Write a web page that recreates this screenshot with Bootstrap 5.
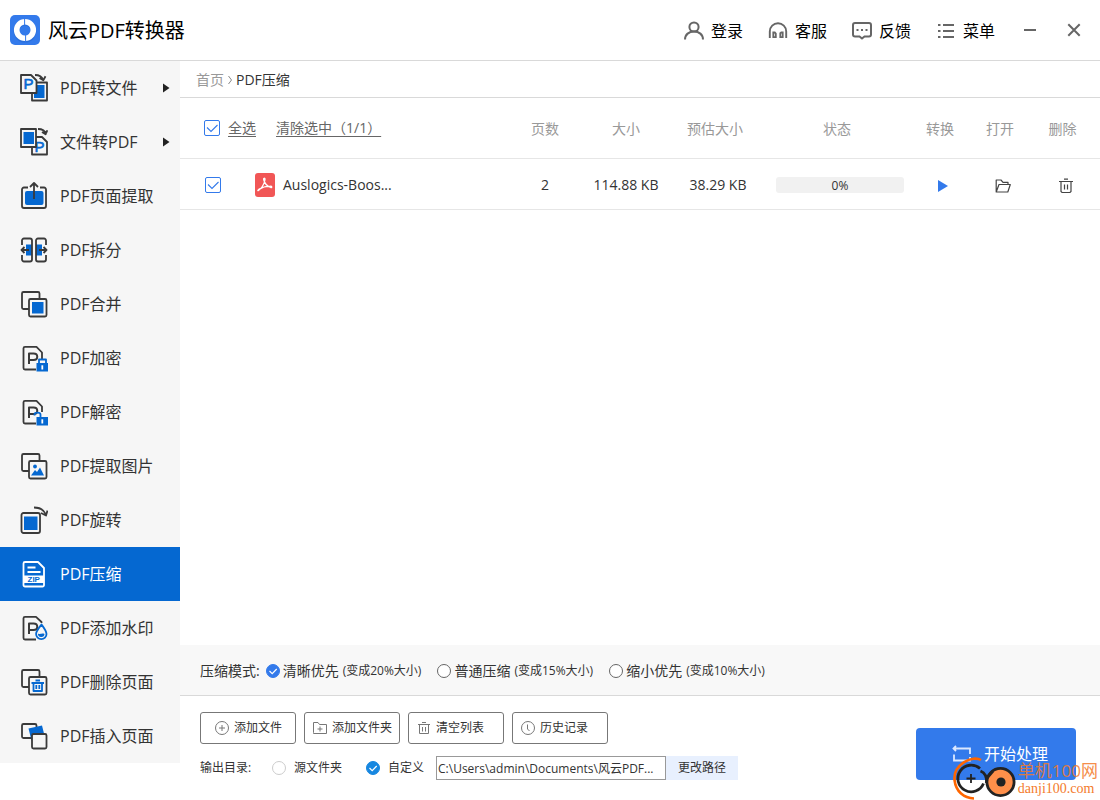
<!DOCTYPE html>
<html lang="zh-CN">
<head>
<meta charset="utf-8">
<meta name="viewport" content="width=device-width, initial-scale=1">
<title>风云PDF转换器</title>
<link rel="stylesheet" href="https://cdn.jsdelivr.net/npm/bootstrap@5.3.0/dist/css/bootstrap.min.css">
<style>
  :root { --ink: #333; --brand: #0568d1; --action: #337aeb; --rule: #d9d9d9; }
  body { font-family: "Open Sans", "Noto Sans CJK SC", sans-serif; font-size: 14px; line-height: 20px; color: var(--ink); }
  svg { flex: none; display: block; }
  .top-bar { height: 61px; border-bottom: 1px solid var(--rule); padding: 0 16px 0 10px; }
  .app-title { font-size: 20px; line-height: 28px; color: #000; padding-top: 2px; }
  .plain-btn { border: 0; background: none; padding: 0; color: inherit; }
  .top-actions { gap: 25px; font-size: 16px; color: #000; padding: 2px 1px 0 0; }
  .top-actions .plain-btn { gap: 7px; }
  .top-actions svg, .win-btn svg { stroke: #666; fill: none; stroke-width: 2; }
  .side-nav { width: 180px; }
  .side-nav ul { background: #f6f6f6; }
  .side-link { height: 54px; padding: 0 10px 0 20px; gap: 12px; font-size: 16px; color: var(--ink); text-decoration: none; }
  .side-link.active { background: var(--brand); color: #fff; }
  .side-link svg { stroke: #3a3a3a; stroke-width: 1.8; fill: none; stroke-linejoin: round; }
  .side-link.active svg { stroke: #fff; }
  .side-link svg.caret { fill: #222; stroke: none; }
  .side-link svg text { font-size: 15px; fill: var(--brand); stroke: var(--brand); stroke-width: .6; font-family: "Liberation Sans", sans-serif; }
  .side-link svg .zip { font-size: 8px; font-weight: 700; stroke: none; }
  .side-link .b { fill: var(--brand); stroke: none; }
  .side-link .ln { stroke: var(--brand); }
  .side-link .bg { fill: #f6f6f6; }
  .crumbs { height: 37px; padding: 2px 16px 0; border-bottom: 1px solid var(--rule); }
  .crumbs a { color: #999; text-decoration: none; }
  .file-table { table-layout: fixed; }
  .file-table th { height: 60px; padding: 2px 0 0; font-weight: 400; color: #999; border-bottom: 1px solid #e6e6e6; }
  .file-table th:nth-child(n+4) { padding-right: 6px; }
  .file-table td { height: 51px; padding: 2px 0 0; border-bottom: 1px solid #e6e6e6; }
  .file-table th:first-child { padding: 0 0 0 24px; }
  .file-table td:first-child { padding-left: 25px; }
  .file-table th .plain-btn { color: #666; text-decoration: underline; text-underline-offset: 3px; }
  .clear-btn { margin-left: 20px; }
  .file-label { margin-left: 34px; }
  .tick { appearance: none; width: 16px; height: 16px; margin: 0; border: 1px solid var(--action); border-radius: 2px; background: #fff; }
  .tick:checked { background: #fff url("data:image/svg+xml,%3Csvg xmlns='http://www.w3.org/2000/svg' viewBox='0 0 14 14'%3E%3Cpath d='M2 6.5l4 4 6.5-6.5' fill='none' stroke='%23337aeb' stroke-width='1.1'/%3E%3C/svg%3E"); }
  .meter { width: 128px; height: 16px; background: #f1f1f1; border-radius: 3px; font-size: 12px; line-height: 17px; }
  .dot { appearance: none; width: 14px; height: 14px; margin: 0; border: 1px solid #666; border-radius: 50%; background: #fff; }
  .dot.soft { border-color: #ccc; }
  .dot:checked { border-color: var(--action); background: var(--action) url("data:image/svg+xml,%3Csvg xmlns='http://www.w3.org/2000/svg' viewBox='0 0 12 12'%3E%3Cpath d='M2.5 6l2.7 2.6 4.5-4.6' fill='none' stroke='%23fff' stroke-width='1.2'/%3E%3C/svg%3E"); }
  .dot.soft:checked { border-color: #1787e0; background-color: #1787e0; }
  .mode-bar { min-height: 51px; background: #f8f8f8; border-bottom: 1px solid var(--rule); padding: 2px 20px 0; }
  .mode-bar label { margin-right: 16px; }
  .mode-title { margin-right: 6px; }
  .mode-name { margin: 0 4px 0 3px; }
  .mode-bar .hint, .foot { font-size: 12px; }
  .foot { padding: 16px 24px 20px 20px; }
  .tool-btn { width: 96px; height: 32px; border: 1px solid #777; border-radius: 3px; background: #fff; color: var(--ink); gap: 5px; padding: 0 0 0 8px; }
  .tool-btn:first-child { padding-left: 14px; }
  .tool-btn svg { stroke: #777; fill: none; }
  .out-label { width: 72px; }
  .out-near { margin-right: 24px; }
  .out-far { margin-right: 12px; }
  .path-box { width: 230px; height: 24px; border: 1px solid #999; padding: 0 1px; color: var(--ink); }
  .path-btn { width: 72px; height: 24px; background: #e8f0fe; }
  .start-btn { width: 160px; height: 52px; border: 0; border-radius: 4px; background: var(--action); color: #fff; font-size: 16px; line-height: 20px; gap: 12px; padding: 0 0 0 8px; }
  .stamp { right: 2px; bottom: 0; color: #f47b2c; pointer-events: none; }
  .stamp-text { padding-bottom: 2px; }
  .stamp-name { font-size: 17px; line-height: 18px; opacity: .85; }
  .stamp-site { font-size: 14px; line-height: 18px; font-family: "Liberation Serif", serif; }
</style>
</head>
<body class="d-flex flex-column min-vh-100">
<header class="top-bar d-flex align-items-center">
  <svg width="30" height="30" viewBox="0 0 30 30"><rect width="30" height="30" rx="5" fill="#337aeb"/><circle cx="15" cy="16" r="8.500" fill="none" stroke="#1f5fc4" stroke-width="6" opacity=".4"/><circle cx="15" cy="15" r="8.300" fill="none" stroke="#fff" stroke-width="5.600"/><path d="M14.600 3v7M15.600 20v7" stroke="#337aeb"/></svg>
  <h1 class="app-title fw-normal mb-0 ms-2">风云PDF转换器</h1>
  <div class="top-actions d-flex align-items-center ms-auto">
    <button class="plain-btn d-flex align-items-center"><svg width="20" height="20" viewBox="0 0 20 20"><circle cx="10" cy="6" r="4.600"/><path d="M1 18.500c0-5 4-8 9-8s9 3 9 8"/></svg>登录</button>
    <button class="plain-btn d-flex align-items-center"><svg width="20" height="20" viewBox="0 0 20 20"><path d="M1.800 17v-6.500a8.200 8.200 0 0 1 16.400 0V17" stroke-width="1.900"/><path d="M5.300 11.500h1.500l1 1v3.700H5.300zM12.300 12.300l1-.8h1.400v4.700h-2.400z" stroke-width="1.800"/></svg>客服</button>
    <button class="plain-btn d-flex align-items-center"><svg width="20" height="20" viewBox="0 0 20 20"><path d="M3 2h14a2 2 0 0 1 2 2v9.500a2 2 0 0 1-2 2h-4.500L10 17.500l-2.500-2H3a2 2 0 0 1-2-2V4a2 2 0 0 1 2-2z"/><path d="M4.500 9h2M9 9h2M13.500 9h2"/></svg>反馈</button>
    <button class="plain-btn d-flex align-items-center"><svg width="20" height="20" viewBox="0 0 20 20"><path d="M2 4h2.500M2 10h2.500M2 16h2.500M7 4h11M7 10h11M7 16h11"/></svg>菜单</button>
  </div>
  <button class="plain-btn win-btn ms-4" aria-label="最小化"><svg width="20" height="20" viewBox="0 0 20 20"><path d="M4 10h12"/></svg></button>
  <button class="plain-btn win-btn ms-4" aria-label="关闭"><svg width="20" height="20" viewBox="0 0 20 20"><path d="M4.300 4.300l11.400 11.400M15.700 4.300L4.300 15.700"/></svg></button>
</header>
<div class="d-flex flex-grow-1">
  <nav class="side-nav flex-shrink-0">
    <ul class="list-unstyled mb-0">
      <li><a href="#" class="side-link d-flex align-items-center"><svg width="28" height="28" viewBox="0 0 28 28"><rect x="12" y="8.500" width="15" height="18"/><rect class="b" x="14" y="11" width="10.500" height="13"/><path class="bg" d="M1 1h10l5.500 5.500V19H1z"/><text x="3.500" y="15">P</text><path d="M15 1c4 0 7 1.500 8 5M19.500 4L23.300 6.300l2.200-4"/></svg>PDF转文件<svg class="caret ms-auto" width="8" height="10" viewBox="0 0 8 10"><path d="M1 .5v9L7.500 5z"/></svg></a></li>
      <li><a href="#" class="side-link d-flex align-items-center"><svg width="28" height="28" viewBox="0 0 28 28"><path d="M12 9h10l5 5v12.500H12z"/><text x="14.500" y="23.500">P</text><rect class="bg" x="1" y="1" width="15" height="18"/><rect class="b" x="3.500" y="4" width="10.500" height="12"/><path d="M18 1c4 0 7 1.500 8 5M22 4L25.600 6.300l1.700-4"/></svg>文件转PDF<svg class="caret ms-auto" width="8" height="10" viewBox="0 0 8 10"><path d="M1 .5v9L7.500 5z"/></svg></a></li>
      <li><a href="#" class="side-link d-flex align-items-center"><svg width="28" height="28" viewBox="0 0 28 28"><rect class="b" x="5" y="9" width="18.500" height="14" rx="2"/><path d="M8 5.500H4a2 2 0 0 0-2 2V24a2 2 0 0 0 2 2h20a2 2 0 0 0 2-2V7.500a2 2 0 0 0-2-2h-4M14 17V1.500M10 5l4-4 4 4"/></svg>PDF页面提取</a></li>
      <li><a href="#" class="side-link d-flex align-items-center"><svg width="28" height="28" viewBox="0 0 28 28"><path class="b" d="M6 8.500h6v11H6zM16 8.500h6v11h-6z"/><path d="M2 9V4.500a2 2 0 0 1 2-2h6a2 2 0 0 1 2 2v19a2 2 0 0 1-2 2H4a2 2 0 0 1-2-2V19M26 9V4.500a2 2 0 0 0-2-2h-6a2 2 0 0 0-2 2v19a2 2 0 0 0 2 2h6a2 2 0 0 0 2-2V19M9 14H1.500M4.500 11l-3 3 3 3M19 14h7.500M23.500 11l3 3-3 3"/></svg>PDF拆分</a></li>
      <li><a href="#" class="side-link d-flex align-items-center"><svg width="28" height="28" viewBox="0 0 28 28"><rect x="2" y="2" width="17.500" height="17" rx="1.500"/><rect class="bg" x="9" y="9" width="17.500" height="17.500" rx="1.500"/><rect class="b" x="12" y="12" width="11.500" height="11.500"/></svg>PDF合并</a></li>
      <li><a href="#" class="side-link d-flex align-items-center"><svg width="28" height="28" viewBox="0 0 28 28"><path d="M22 15V8.500L16.500 2.800H5a1.500 1.500 0 0 0-1.500 1.500V24A1.500 1.500 0 0 0 5 25.500h11"/><path d="M9 20V9.500h4.500c5 0 5 6.500 0 6.500H9" stroke-width="2"/><path class="ln" d="M19 20v-4.500h7V20"/><path class="b" d="M16.500 19H28v8.500H16.500z"/><path d="M22.300 21.300v4.200" style="stroke:#fff"/></svg>PDF加密</a></li>
      <li><a href="#" class="side-link d-flex align-items-center"><svg width="28" height="28" viewBox="0 0 28 28"><path d="M22 14V8.500L16.500 2.800H5a1.500 1.500 0 0 0-1.500 1.500V24A1.500 1.500 0 0 0 5 25.500h11"/><path d="M9 20V9.500h4.500c5 0 5 6.500 0 6.500H9" stroke-width="2"/><path class="ln" d="M14.500 17.500V16.500c0-2.500 6-2.500 6 0V20"/><path class="b" d="M16.500 19H28v8.500H16.500z"/><path d="M22.300 21.300v4.200" style="stroke:#fff"/></svg>PDF解密</a></li>
      <li><a href="#" class="side-link d-flex align-items-center"><svg width="28" height="28" viewBox="0 0 28 28"><rect x="2" y="2" width="17.500" height="17" rx="1.500"/><rect class="bg" x="9" y="9" width="17.500" height="17.500" rx="1.500"/><circle class="b" cx="15" cy="14.500" r="1.900"/><path class="b" d="M11 23.500l4-5.500 2 2 3-4.500 4 8z"/></svg>PDF提取图片</a></li>
      <li><a href="#" class="side-link d-flex align-items-center"><svg width="28" height="28" viewBox="0 0 28 28"><rect x="1.500" y="7" width="18.500" height="20" rx="2"/><rect class="b" x="4" y="10.500" width="13.500" height="13.500"/><path d="M14 1.500c6 0 10 2.500 12 7M21 7l5 2.500 1.500-5"/></svg>PDF旋转</a></li>
      <li><a href="#" class="side-link active d-flex align-items-center" aria-current="page"><svg width="28" height="28" viewBox="0 0 28 28"><path d="M5 2h13l6 6v17a1.500 1.500 0 0 1-1.500 1.500H5A1.500 1.500 0 0 1 3.500 25V3.500A1.500 1.500 0 0 1 5 2zM7.500 7.500h8M7.500 12h13"/><path d="M3.500 15.500H24V23H3.500z" fill="#fff" stroke="none"/><text class="zip" x="7.500" y="22">ZIP</text></svg>PDF压缩</a></li>
      <li><a href="#" class="side-link d-flex align-items-center"><svg width="28" height="28" viewBox="0 0 28 28"><path d="M21.500 9V8L16 2.800H5a1.500 1.500 0 0 0-1.500 1.500V24A1.500 1.500 0 0 0 5 25.500h11"/><path d="M9 20V9.500h4.500c5 0 5 6.500 0 6.500H9" stroke-width="2"/><path class="bg ln" d="M21.500 10.500c3 4 5 6.500 5 9.500a5.200 5.200 0 0 1-10.400 0c0-3 2.400-5.500 5.400-9.500z"/><path class="b" d="M18 19.500c2 1.500 4-1 6.500.5a3.200 3.200 0 0 1-6.500-.5z"/></svg>PDF添加水印</a></li>
      <li><a href="#" class="side-link d-flex align-items-center"><svg width="28" height="28" viewBox="0 0 28 28"><rect x="2" y="2" width="17.500" height="17" rx="1.500"/><rect class="bg" x="9" y="9" width="17.500" height="17.500" rx="1.500"/><path class="ln" d="M11.500 15h12.500M15.500 12.500h4.500M13.500 16v7h8.500v-7M16.300 17v4M19.300 17v4"/></svg>PDF删除页面</a></li>
      <li><a href="#" class="side-link d-flex align-items-center"><svg width="28" height="28" viewBox="0 0 28 28"><rect x="2" y="2" width="14.500" height="14" rx="1.500"/><path class="b" d="M8.500 6.500l13.500-3 2.500 10-13 5z"/><rect class="bg" x="12" y="12" width="14.500" height="14.500" rx="1.500"/></svg>PDF插入页面</a></li>
    </ul>
  </nav>
  <main class="d-flex flex-column flex-grow-1 overflow-hidden">
    <div class="crumbs d-flex align-items-center gap-1"><a href="#">首页</a><svg width="4" height="10" viewBox="0 0 4 10"><path d="M.5 1l3 4-3 4" fill="none" stroke="#888"/></svg><span>PDF压缩</span></div>
    <table class="file-table w-100 text-center">
      <colgroup><col><col style="width:80px"><col style="width:82px"><col style="width:102px"><col style="width:142px"><col style="width:64px"><col style="width:56px"><col style="width:69px"></colgroup>
      <thead><tr>
        <th class="text-start"><div class="d-flex align-items-center"><input class="tick" type="checkbox" id="all" checked><label for="all" class="ms-2 plain-btn">全选</label><button class="plain-btn clear-btn">清除选中（1/1）</button></div></th>
        <th>页数</th><th>大小</th><th>预估大小</th><th>状态</th><th>转换</th><th>打开</th><th>删除</th>
      </tr></thead>
      <tbody><tr>
        <td class="text-start"><div class="d-flex align-items-center"><input class="tick" type="checkbox" id="f1" checked><label for="f1" class="file-label d-flex align-items-center gap-2"><svg width="20" height="24" viewBox="0 0 20 24"><rect width="20" height="24" rx="3" fill="#f15656"/><path d="M3.500 17.500c2-1 6-6 6.500-11 .2-2-2-1.500-1.200.5 1 3.500 3.500 6.500 7 7.500 1.500.3 1.200-1.500-.5-1.300-4 .1-8.500 1.300-11.500 3.200-1.300 1-1.200 1.600-.3 1.100z" fill="none" stroke="#fff" stroke-width="1.300"/></svg>Auslogics-Boos...</label></div></td>
        <td>2</td><td>114.88 KB</td><td>38.29 KB</td>
        <td><div class="meter mx-auto">0%</div></td>
        <td><button class="plain-btn align-middle" aria-label="转换"><svg width="10" height="12" viewBox="0 0 10 12"><path d="M0 0l10 6-10 6z" fill="#337aeb"/></svg></button></td>
        <td><button class="plain-btn align-middle" aria-label="打开"><svg width="16" height="16" viewBox="0 0 16 16" fill="none" stroke="#444" stroke-width="1.200"><path d="M1.200 14V2H6l2 2.300h5V6.500M1.200 14L4 6.500h11.300L12.800 14z" stroke-linejoin="round"/></svg></button></td>
        <td><button class="plain-btn align-middle" aria-label="删除"><svg width="16" height="16" viewBox="0 0 16 16" fill="none" stroke="#444" stroke-width="1.200"><path d="M1 3.500h14M6 1.200h4M3 3.500V13.500l1 1h8l1-1V3.500M6.500 6.500v5M9.500 6.500v5"/></svg></button></td>
      </tr></tbody>
    </table>
    <div class="mode-bar d-flex flex-wrap align-items-center mt-auto">
      <span class="mode-title">压缩模式:</span>
      <label class="d-flex align-items-center"><input class="dot" type="radio" name="mode" checked><span class="mode-name">清晰优先</span><span class="hint">(变成20%大小)</span></label>
      <label class="d-flex align-items-center"><input class="dot" type="radio" name="mode"><span class="mode-name">普通压缩</span><span class="hint">(变成15%大小)</span></label>
      <label class="d-flex align-items-center"><input class="dot" type="radio" name="mode"><span class="mode-name">缩小优先</span><span class="hint">(变成10%大小)</span></label>
    </div>
    <footer class="foot d-flex align-items-end justify-content-between position-relative">
      <div>
        <div class="d-flex gap-2 mb-2 pb-1">
          <button class="tool-btn d-flex align-items-center"><svg width="14" height="14" viewBox="0 0 14 14"><circle cx="7" cy="7" r="6.500"/><path d="M4 7h6M7 4v6"/></svg>添加文件</button>
          <button class="tool-btn d-flex align-items-center"><svg width="14" height="14" viewBox="0 0 14 14"><path d="M.5 11.500v-10h4.500l1.500 2h7v9h-13zM4.500 8h5M7 5.500v5"/></svg>添加文件夹</button>
          <button class="tool-btn d-flex align-items-center"><svg width="14" height="14" viewBox="0 0 14 14"><path d="M1 3.500h12M5 1.500h4M2.500 3.500v9h9v-9M5.500 6v4.500M8.500 6v4.500"/></svg>清空列表</button>
          <button class="tool-btn d-flex align-items-center"><svg width="14" height="14" viewBox="0 0 14 14"><circle cx="7" cy="7" r="6.500"/><path d="M6.500 3.500V8l2 2"/></svg>历史记录</button>
        </div>
        <div class="d-flex align-items-center">
          <span class="out-label">输出目录:</span>
          <label class="out-near d-flex align-items-center gap-2"><input class="dot soft" type="radio" name="out">源文件夹</label>
          <label class="out-far d-flex align-items-center gap-2"><input class="dot soft" type="radio" name="out" checked>自定义</label>
          <input class="path-box" type="text" aria-label="输出目录" readonly value="C:\Users\admin\Documents\风云PDF...">
          <button class="plain-btn path-btn">更改路径</button>
        </div>
      </div>
      <button class="start-btn d-flex align-items-center justify-content-center"><svg width="20" height="18" viewBox="0 0 20 18" fill="none" stroke="#dbe8ff" stroke-width="1.800"><path d="M4 1L1.500 3.500 4 6M1.500 3.500H18V9M2 9.500v6h16V12"/></svg>开始处理</button>
      <div class="stamp position-absolute d-flex align-items-end">
        <svg width="68" height="44" viewBox="0 0 68 44" fill="none"><path d="M31 4C23-1 3 8 4.500 24 6 36 14 42 24 42.500" stroke="#f60" stroke-width="2.600"/><path d="M30 12.500a13.300 13.300 0 1 0 3.500 15" stroke="#222" stroke-width="2.800"/><path d="M16.500 22.500h9M21 18v9" stroke="#222" stroke-width="1.800"/><circle cx="50.500" cy="26" r="13.600" fill="#ff8f4a" stroke="#222" stroke-width="2.800"/><circle cx="51" cy="26" r="4.600" fill="#222"/><path d="M30.500 15c5 2 6.500 6 6 12M43 15l-6 7" stroke="#222" stroke-width="2.800"/></svg>
        <div class="stamp-text"><div class="stamp-name">单机100网</div><div class="stamp-site">danji100.com</div></div>
      </div>
    </footer>
  </main>
</div>
<script src="https://cdn.jsdelivr.net/npm/bootstrap@5.3.0/dist/js/bootstrap.bundle.min.js"></script>
</body>
</html>
